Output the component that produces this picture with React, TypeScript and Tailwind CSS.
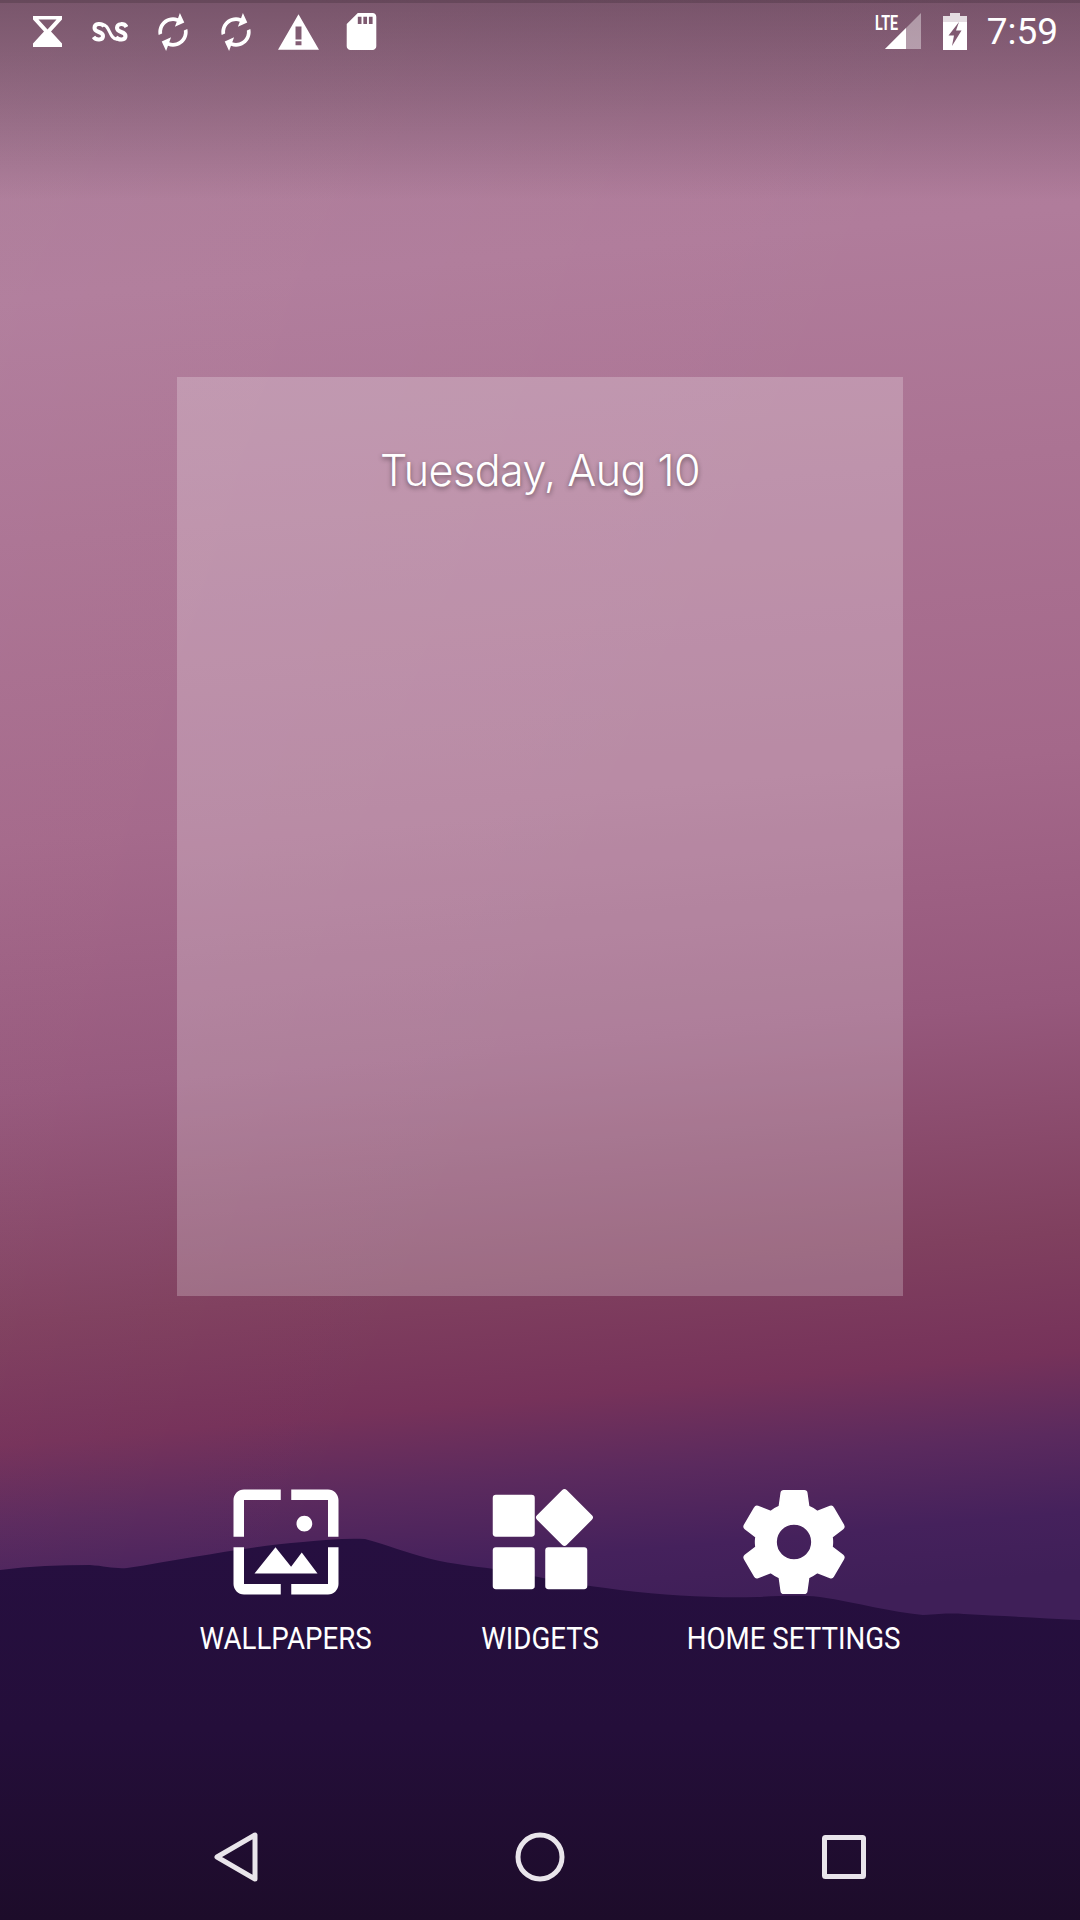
const navStroke = "#e9e5eb";

function Hourglass() {
    return (
        <svg viewBox="0 0 29 31" className="w-[29px] h-[31px] ml-[33px]" fill="white">
            <path fillRule="evenodd" d="M0 0h29v3.500L18 15.500 29 27.500V31H0v-3.500L11 15.500 0 3.500zM5.500 3.500l9 10 9-10z" />
        </svg>
    )
}

function Scrobble() {
    return (
        <svg viewBox="0 0 36 20" className="w-[36px] h-[20px] ml-[30px]" fill="none" stroke="white" strokeWidth="4">
            <path d="M12 4.500C10 1 2.500 1 2.500 6 2.500 11 11 9 11 14 11 18.500 4 18.500 1.500 15" />
            <path d="M10.500 2.500C18 2.500 17 17.500 25.500 17.500" strokeWidth="3" />
            <path d="M34.500 5C32.500 1 25 1 25 6 25 11 33.500 9 33.500 14 33.500 18.500 26.500 18.500 24 15" />
        </svg>
    )
}

function SyncIcon({ className }: { className: string }) {
    return (
        <svg viewBox="0 0 24 24" className={className} fill="white">
            <g transform="rotate(20 12 12) translate(24 0) scale(-1 1)">
                <path d="M12 4V1L8 5l4 4V6c3.310 0 6 2.690 6 6 0 1.010-.25 1.970-.7 2.800l1.460 1.460C19.540 15.030 20 13.570 20 12c0-4.420-3.580-8-8-8zm0 14c-3.310 0-6-2.690-6-6 0-1.010.25-1.970.7-2.800L5.240 7.740C4.460 8.970 4 10.430 4 12c0 4.420 3.580 8 8 8v3l4-4-4-4v3z" />
            </g>
        </svg>
    )
}

function StatusLeft() {
    return (
        <div className="flex items-center">
            <Hourglass />
            <Scrobble />
            <SyncIcon className="w-[44px] h-[44px] ml-[23px]" />
            <SyncIcon className="w-[44px] h-[44px] ml-[19px]" />
            <svg viewBox="1 2 22 19" className="w-[41px] h-[36px] ml-[20px]" fill="white">
                <path fillRule="evenodd" d="M12 2L23 21H1zM10.400 8.500v7h3.200v-7zM10.400 16.400v2.200h3.200v-2.200z" />
            </svg>
            <svg viewBox="4 2 16 20" className="w-[31px] h-[37px] ml-[27px]" fill="white">
                <path d="M18 2h-8L4.020 8 4 20c0 1.100.9 2 2 2h12c1.100 0 2-.9 2-2V4c0-1.100-.9-2-2-2zm-6 6h-2V4h2v4zm3 0h-2V4h2v4zm3 0h-2V4h2v4z" />
            </svg>
        </div>
    )
}

function StatusRight() {
    return (
        <div className="flex items-center">
            <div className="relative w-[45px] h-[36px] mt-[-2px]">
                <svg viewBox="0 0 36 36" className="absolute right-0 top-0 w-[36px] h-[36px]">
                    <path d="M36 0v36H0z" fill="white" fillOpacity="0.4" />
                    <path d="M21 15v21H0z" fill="white" />
                </svg>
                <span className="absolute left-[-1px] top-[-2px] text-[21px] leading-[24px] font-bold text-white font-['Roboto'] scale-x-[0.68] origin-left">LTE</span>
            </div>
            <svg viewBox="0 0 24 37" className="w-[24px] h-[37px] ml-[22px]" fill="white">
                <path fillOpacity="0.8" d="M7 0h10v3h7v6H0V3h7z" />
                <path fillRule="evenodd" d="M0 9h24v28H0zM16 9L5.500 22.500h5.500l-2 10.500 9.500-15.500h-5.500z" />
            </svg>
            <span className="ml-[20px] mr-[22px] text-[37px] leading-none text-white font-['Roboto']">7:59</span>
        </div>
    )
}

function WallpaperIcon() {
    return (
        <svg viewBox="0 0 24 24" className="w-[126px] h-[126px]" fill="white">
            <path d="M4 4h7V2H4c-1.100 0-2 .9-2 2v7h2V4zm6 9l-4 5h12l-3-4-2.030 2.710L10 13zm7-4.500c0-.83-.67-1.500-1.500-1.500S14 7.670 14 8.500s.67 1.500 1.500 1.500S17 9.330 17 8.500zM20 2h-7v2h7v7h2V4c0-1.100-.9-2-2-2zm0 18h-7v2h7c1.100 0 2-.9 2-2v-7h-2v7zM4 13H2v7c0 1.100.9 2 2 2h7v-2H4v-7z" />
        </svg>
    )
}

function WidgetsIcon() {
    return (
        <svg viewBox="0 0 24 24" className="w-[126px] h-[126px]" fill="white">
            <rect x="3" y="3" width="8" height="8" rx="0.6" />
            <rect x="3" y="13" width="8" height="8" rx="0.6" />
            <rect x="13" y="13" width="8" height="8" rx="0.6" />
            <rect x="12.660" y="3.340" width="8" height="8" rx="0.6" transform="rotate(45 16.660 7.340)" />
        </svg>
    )
}

function SettingsIcon() {
    return (
        <svg viewBox="-0.3 -0.3 24.6 24.6" className="w-[126px] h-[126px]" fill="white" stroke="white" strokeWidth="0.3" strokeLinejoin="round">
            <path d="M19.430 12.980c.04-.32.07-.64.07-.98s-.03-.66-.07-.98l2.110-1.650c.19-.15.24-.42.12-.64l-2-3.460c-.12-.22-.39-.3-.61-.22l-2.490 1c-.52-.4-1.080-.73-1.690-.98l-.38-2.650C14.460 2.180 14.250 2 14 2h-4c-.25 0-.46.18-.49.42l-.38 2.650c-.61.25-1.170.59-1.690.98l-2.490-1c-.23-.09-.49 0-.61.22l-2 3.460c-.13.22-.07.49.12.64l2.110 1.650c-.04.32-.07.65-.07.98s.03.66.07.98l-2.110 1.650c-.19.15-.24.42-.12.64l2 3.460c.12.22.39.3.61.22l2.490-1c.52.4 1.080.73 1.690.98l.38 2.650c.03.24.24.42.49.42h4c.25 0 .46-.18.49-.42l.38-2.650c.61-.25 1.170-.59 1.690-.98l2.490 1c.23.09.49 0 .61-.22l2-3.460c.12-.22.07-.49-.12-.64l-2.110-1.650zM12 15.500c-1.930 0-3.500-1.570-3.500-3.500s1.570-3.500 3.500-3.500 3.500 1.570 3.500 3.500-1.570 3.500-3.500 3.500z" />
        </svg>
    )
}

function Option({ label, children }: { label: string; children: React.ReactNode }) {
    return (
        <div className="flex flex-col items-center w-[254px]">
            {children}
            <span className="mt-[12px] text-[32px] leading-[42px] text-white font-['Roboto'] whitespace-nowrap scale-x-[0.865]">{label}</span>
        </div>
    )
}

function NavBar() {
    return (
        <div className="h-[126px] px-[214px] flex items-center justify-between">
            <svg viewBox="0 0 44 50" className="w-[44px] h-[50px]" fill="none" stroke={navStroke} strokeWidth="5" strokeLinejoin="round">
                <path d="M41 3v44L3 25z" />
            </svg>
            <svg viewBox="0 0 50 50" className="w-[50px] h-[50px]" fill="none" stroke={navStroke} strokeWidth="5">
                <circle cx="25" cy="25" r="22" />
            </svg>
            <svg viewBox="0 0 44 44" className="w-[44px] h-[44px]" fill="none" stroke={navStroke} strokeWidth="5" strokeLinejoin="round">
                <rect x="2.500" y="2.500" width="39" height="39" rx="1" />
            </svg>
        </div>
    )
}

function App() {
    return (
        <div className="relative w-[1080px] h-[1920px] overflow-hidden flex flex-col bg-[linear-gradient(175deg,#a87a95_44px,#b07c9b_300px,#ab7393_540px,#a4688a_840px,#96587c_1090px,#80405f_1320px,#76325a_1440px,#5b2a5e_1520px,#45215c_1600px,#3f1f58_1660px)]">
            {/* wallpaper layers */}
            <div className="absolute inset-0 bg-[linear-gradient(115deg,rgba(255,255,255,0.03)_0%,rgba(255,255,255,0)_55%)]" />
            <div className="absolute inset-x-0 top-0 h-[200px] bg-[linear-gradient(180deg,rgba(40,20,35,0.38),rgba(40,20,35,0.2)_50%,rgba(40,20,35,0))]" />
            <div className="absolute inset-x-0 top-0 h-[3px] bg-black/15" />
            <svg viewBox="0 0 1080 420" className="absolute left-0 bottom-0 w-[1080px] h-[420px]" preserveAspectRatio="none">
                <defs>
                    <linearGradient id="hill" x1="0" y1="0" x2="0" y2="1">
                        <stop offset="0" stopColor="#260f40" />
                        <stop offset="0.5" stopColor="#240e3a" />
                        <stop offset="1" stopColor="#1d0c2a" />
                    </linearGradient>
                </defs>
                <path fill="url(#hill)" d="M0 70C30 66 60 65 90 65 105 66 115 69 127 68 190 58 250 46 303 42 325 40 345 38 365 39 390 46 405 52 427 58 455 65 480 67 503 70 545 79 580 85 620 90 670 96 715 98 757 97 780 96 800 95 820 97 860 103 890 112 923 115 940 114 950 113 964 114 1005 116 1040 118 1080 120V420H0z" />
            </svg>

            <div className="relative flex flex-col h-full">
                <div className="flex items-center justify-between h-[63px]">
                    <StatusLeft />
                    <StatusRight />
                </div>

                <div className="self-center w-[726px] h-[919px] mt-[314px] bg-white/[0.23] flex justify-center">
                    <p className="mt-[68px] h-[50px] text-[43px] leading-[50px] font-light text-white font-['Inter'] tracking-[-0.5px] [text-shadow:0_2px_5px_rgba(0,0,0,0.45)]">Tuesday, Aug 10</p>
                </div>

                <div className="flex justify-center mt-[183px]">
                    <Option label="WALLPAPERS"><WallpaperIcon /></Option>
                    <Option label="WIDGETS"><WidgetsIcon /></Option>
                    <Option label="HOME SETTINGS"><SettingsIcon /></Option>
                </div>

                <div className="mt-auto">
                    <NavBar />
                </div>
            </div>
        </div>
    )
}

export default App
